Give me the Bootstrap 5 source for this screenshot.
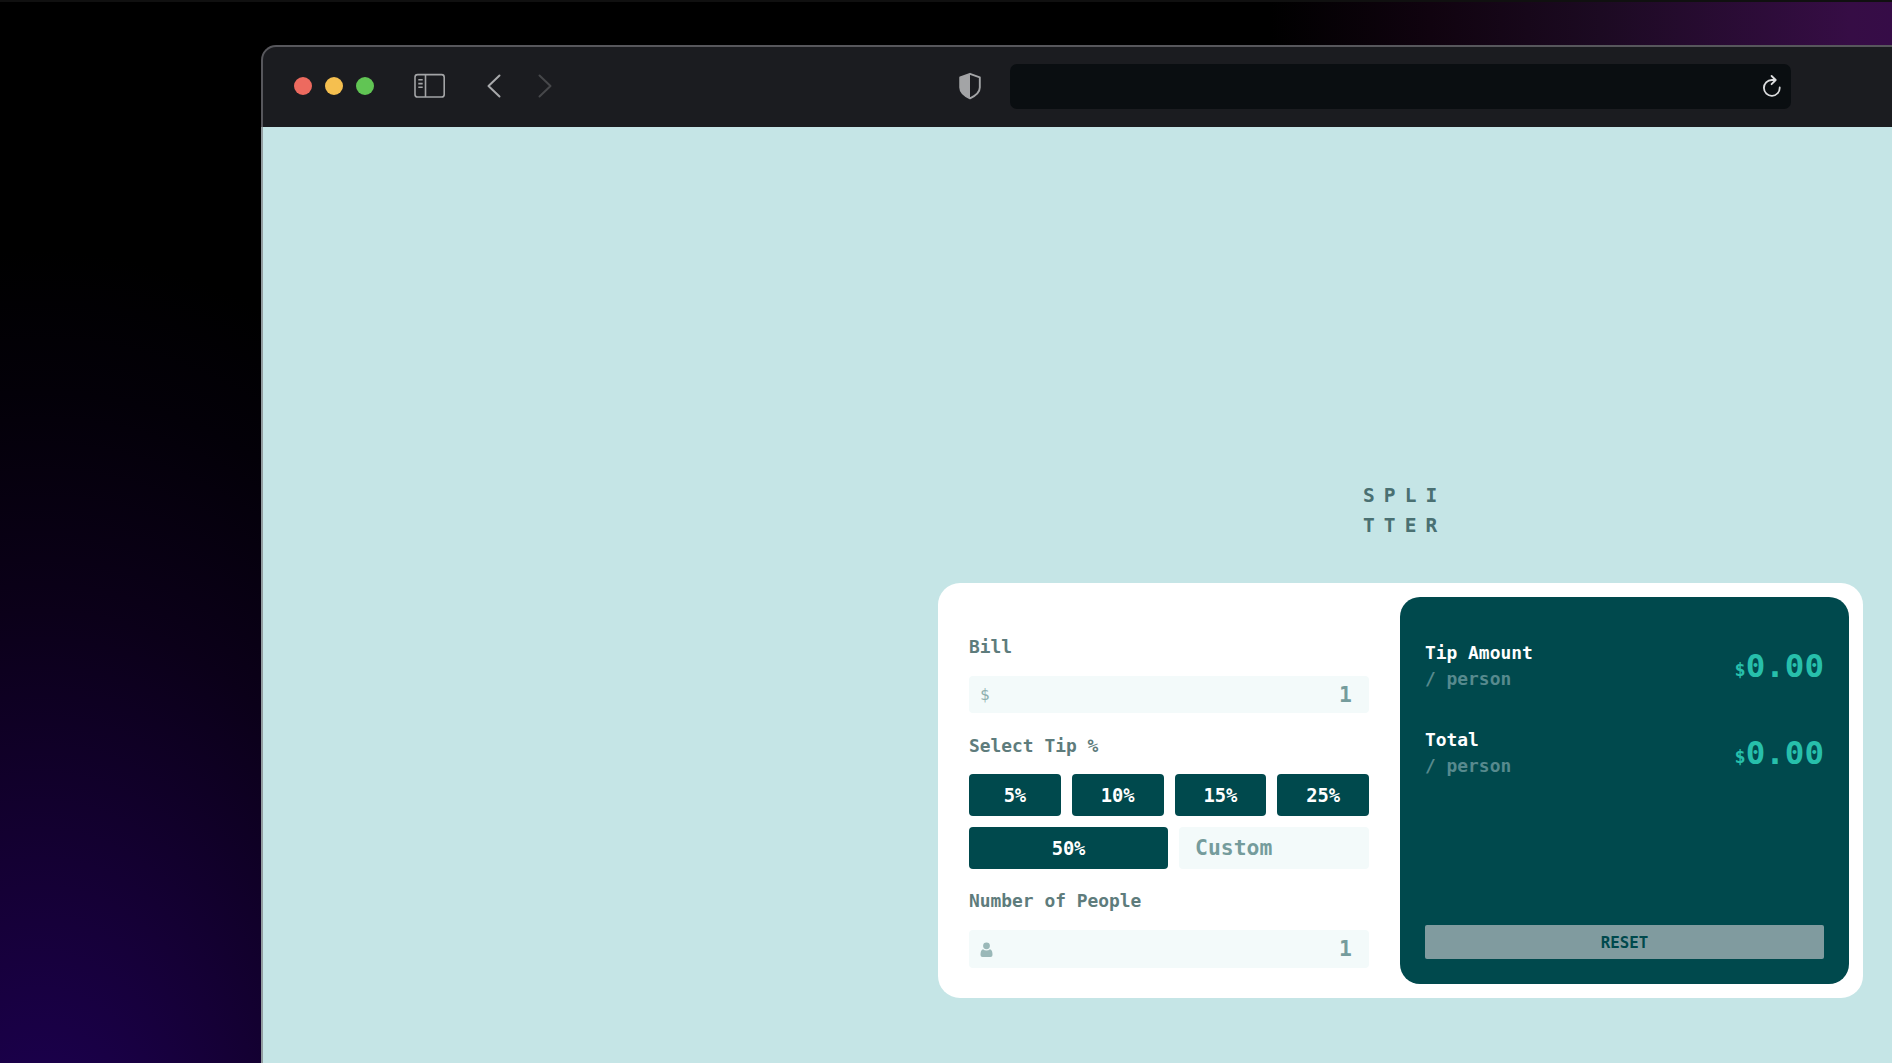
<!DOCTYPE html>
<html lang="en">
<head>
<meta charset="utf-8">
<title>Splitter</title>
<link href="https://cdn.jsdelivr.net/npm/bootstrap@5.3.0/dist/css/bootstrap.min.css" rel="stylesheet">
<style>
html,body{height:100%}
body{background:
 linear-gradient(#101010,#101010) 0 0/100% 2px no-repeat,
 linear-gradient(90deg,transparent 1270px,#10030f 1430px,#1c0a22 1600px,#360d45 1850px,#360c47) 0 0/100% 60px no-repeat,
 radial-gradient(ellipse 640px 950px at 40px 1200px,#1e0058,#150036 33%,#0b0019 62%,#030008 85%,transparent),#000;
 overflow:hidden;font-family:"DejaVu Sans Mono","Liberation Mono",monospace;font-weight:700}
.desk{height:1063px;padding:45px 0 0 261px;overflow:hidden}
.win{width:1960px;height:1100px;border:2px solid rgba(120,120,125,.65);border-radius:15px 15px 0 0;background:linear-gradient(#1b1c20 82px,#c5e5e6 82px) border-box;overflow:hidden}
.bar{height:80px;padding:0 0 3px 31px}
.dot{width:18px;height:18px;border-radius:50%;margin-right:13px}
.address{width:781px;height:45px;border-radius:7px;background:#0a0e11;margin:1px 0 0 28px;padding-right:9px}
.view{padding-left:675px}
.brandmark{width:925px;padding:354px 0 0 425px;font-size:19.5px;line-height:30px;letter-spacing:9.1px;color:#4a7072}
.calc{width:925px;height:415px;margin-top:42px;border-radius:22px;background:#fff;padding:14px 14px 14px 31px}
.entry{width:400px;padding-top:36px}
.lbl{font-size:17.9px;line-height:27px;color:#5e7c7c;margin:0}
.fld{background:#f3fafa;border-radius:4px;color:#759c9c;font-size:21.4px;padding:1px 17px 0 11px}
.tipbtn{height:42px;flex:1 1 0;border:0;border-radius:4px;background:#00494d;color:#fff;font-size:18.8px;font-weight:700;letter-spacing:-.1px;padding:1px 0 0;line-height:41px}
.tipbtn:hover{background:#00494d;color:#fff}
.tipwide{flex:0 0 199px}
.panel{width:449px;height:387px;background:#00494d;border-radius:20px;padding:43px 25px 25px}
.panel .lbl{line-height:26px;color:#fff}
.panel .per{color:#578a8e}
.amt{font-size:32.5px;line-height:36px;color:#27bfab;padding-top:4px}
.amt span{font-size:18.5px;vertical-align:1px}
.reset{height:34px;border:0;border-radius:2px;background:#809b9f;color:#00494d;font-size:15.8px;line-height:32px;padding:2px 0 0;font-weight:700}
svg{display:block;flex:none}
</style>
</head>
<body>
<div class="desk">
 <div class="win">
  <div class="bar d-flex align-items-center">
   <span class="dot" style="background:#ed6a5f"></span><span class="dot" style="background:#f5bf4f"></span><span class="dot" style="background:#61c554"></span>
   <svg style="margin-left:27px" width="32" height="26" viewBox="0 0 32 26" fill="none" stroke="#a3a4a6" stroke-width="1.6"><rect x="1" y="1.6" width="29.2" height="22.4" rx="2.6"/><path d="M11.5 1.6V24M4.3 6.8h4.4M4.3 10.6h4.4M4.3 14.2h4.4" /></svg>
   <svg style="margin-left:40px" width="16" height="26" viewBox="0 0 16 26" fill="none" stroke="#a8a9ab" stroke-width="2" stroke-linecap="round" stroke-linejoin="round"><path d="M13.5 2.5 2.5 13l11 10.5"/></svg>
   <svg style="margin-left:35px" width="16" height="26" viewBox="0 0 16 26" fill="none" stroke="#46474a" stroke-width="2" stroke-linecap="round" stroke-linejoin="round"><path d="M2.5 2.5 13.500 13l-11 10.500"/></svg>
   <svg style="margin-left:405px" width="24" height="28" viewBox="0 0 24 28"><path d="M12 1.8 21.8 5.4V15.5C21.8 20.5 17 24 12 26.4 7 24 2.2 20.5 2.2 15.5V5.4Z" fill="none" stroke="#a3a4a6" stroke-width="1.9" stroke-linejoin="round"/><path d="M12 1.8V26.4C7 24 2.2 20.5 2.2 15.5V5.4Z" fill="#a3a4a6"/></svg>
   <div class="address d-flex align-items-center justify-content-end">
    <svg width="20" height="24" viewBox="0 0 20 24" fill="none" stroke="#dcdddf" stroke-width="1.8" stroke-linecap="round" stroke-linejoin="round"><path d="M17.7 13.5A7.9 7.9 0 1 1 9.8 6H13.5M9.6 2 13.7 6 9.6 10.2"/></svg>
   </div>
  </div>
  <main class="view">
   <div class="brandmark">SPLI<br>TTER</div>
   <div class="calc d-flex justify-content-between">
    <div class="entry">
     <p class="lbl">Bill</p>
     <div class="fld d-flex align-items-center justify-content-between" style="height:37px;margin-top:16px"><span class="fw-normal" style="font-size:16px;color:#8fb0b0">$</span><span>1</span></div>
     <p class="lbl" style="margin-top:19px">Select Tip %</p>
     <div class="d-flex" style="gap:11px;margin-top:15px">
      <button class="btn tipbtn">5%</button><button class="btn tipbtn">10%</button><button class="btn tipbtn">15%</button><button class="btn tipbtn">25%</button>
     </div>
     <div class="d-flex" style="gap:11px;margin-top:11px">
      <button class="btn tipbtn tipwide">50%</button>
      <div class="fld flex-fill d-flex align-items-center" style="padding-left:16px">Custom</div>
     </div>
     <p class="lbl" style="margin-top:18px">Number of People</p>
     <div class="fld d-flex align-items-center justify-content-between" style="height:38px;margin-top:16px"><svg width="13" height="16" viewBox="0 0 13 16" fill="#9ab8b8"><circle cx="6.5" cy="3.8" r="3.4"/><path d="M3 7.2C5 8.8 8 8.8 10 7.2 12 8 12.5 10 12.5 13Q12.5 15 10.5 15H2.5Q.5 15 .5 13C.5 10 1 8 3 7.2Z"/></svg><span>1</span></div>
    </div>
    <div class="panel d-flex flex-column">
     <div class="d-flex justify-content-between align-items-center"><div><p class="lbl">Tip Amount</p><p class="lbl per">/ person</p></div><div class="amt"><span>$</span>0.00</div></div>
     <div class="d-flex justify-content-between align-items-center" style="margin-top:35px"><div><p class="lbl">Total</p><p class="lbl per">/ person</p></div><div class="amt"><span>$</span>0.00</div></div>
     <button class="btn reset w-100 mt-auto">RESET</button>
    </div>
   </div>
  </main>
 </div>
</div>
<script src="https://cdn.jsdelivr.net/npm/bootstrap@5.3.0/dist/js/bootstrap.bundle.min.js"></script>
</body>
</html>
